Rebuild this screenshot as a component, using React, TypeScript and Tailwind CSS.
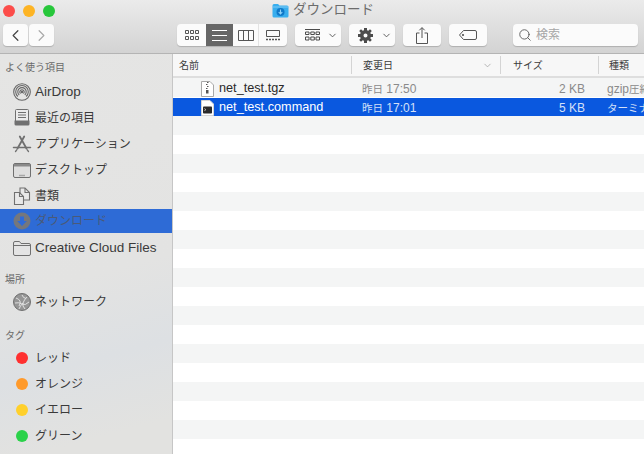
import { ChevronDown, ChevronLeft, ChevronRight, Search } from "lucide-react"
import type { ReactNode } from "react"

const font = "font-['Liberation_Sans','Noto_Sans_CJK_JP',sans-serif]"

function FolderBlue() {
  return (
    <svg width="17" height="15" viewBox="0 0 17 15">
      <path d="M.5 2.500Q.5 1 2 1h4l1.500 1.500H15Q16.500 2.500 16.500 4v9q0 1.500-1.500 1.500H2Q.5 14.500.5 13z" fill="#38aeee" />
      <path d="M.5 4h16" stroke="#7cc8f5" />
      <circle cx="8.500" cy="9" r="4" fill="#0f78c8" />
      <path d="M8.500 6.500v4M6.700 9l1.800 2 1.800-2" stroke="#8fd4fa" strokeWidth="1.100" fill="none" />
    </svg>
  )
}

function IconAirDrop() {
  return (
    <svg width="18" height="18" viewBox="0 0 18 18" fill="none" stroke="#666" strokeWidth="1.100">
      <circle cx="9" cy="9" r="8.300" />
      <path d="M4.800 13.500a6.300 6.300 0 1 1 8.400 0" />
      <path d="M6.200 12a4.200 4.200 0 1 1 5.600 0" />
      <path d="M7.500 10.600a2.200 2.200 0 1 1 3 0" />
      <circle cx="9" cy="9" r=".8" fill="#666" />
    </svg>
  )
}

function IconRecent() {
  return (
    <svg width="18" height="18" viewBox="0 0 18 18">
      <rect x="2.500" y=".5" width="13" height="13" rx="1" fill="#ececec" stroke="#707070" />
      <path d="M5 3.500h8M5 6h8M5 8.500h8" stroke="#707070" />
      <path d="M1.500 11.500h15V15q0 1.500-1.500 1.500H3Q1.500 16.500 1.500 15z" fill="#707070" />
    </svg>
  )
}

function IconApps() {
  return (
    <svg width="20" height="18" viewBox="0 0 20 18" fill="none" stroke="#707070" strokeWidth="1.800" strokeLinecap="round">
      <path d="M7.800 1.500 14.500 13.500M12.200 1.500 5.500 13.500" />
      <path d="M1.500 12.500h17" strokeWidth="1.500" />
      <path d="M3.500 16.500 4.800 14.800M16.500 16.500 15.200 14.800" strokeWidth="1.300" />
    </svg>
  )
}

function IconDesktop() {
  return (
    <svg width="18" height="15" viewBox="0 0 18 15">
      <rect x=".5" y=".5" width="17" height="14" rx="1.500" fill="#dedede" stroke="#707070" />
      <path d="M1 1h16v2.500H1z" fill="#8a8a8a" />
      <path d="M6.500 12.500h5" stroke="#707070" strokeDasharray="1 1" strokeWidth="1.500" />
    </svg>
  )
}

function IconDocs() {
  return (
    <svg width="18" height="18" viewBox="0 0 18 18" fill="none" stroke="#707070" strokeWidth="1.100">
      <path d="M7 1h5l4.500 4.500V13H7z" fill="#e8e8e8" />
      <path d="M12 1v4.500h4.500" />
      <path d="M1.500 5.500h5l4 4v8h-9z" fill="#e8e8e8" />
      <path d="M6.500 5.500v4h4" />
    </svg>
  )
}

function IconDownload() {
  return (
    <svg width="18" height="18" viewBox="0 0 18 18">
      <circle cx="9" cy="9" r="8.500" fill="#74777d" />
      <path d="M7 4.500h4v4.500h2.800L9 14 4.200 9H7z" fill="#2f6bd8" />
    </svg>
  )
}

function IconFolder() {
  return (
    <svg width="18" height="15" viewBox="0 0 18 15" fill="none" stroke="#707070">
      <path d="M.5 2Q.5.500 2 .500h4.500L8 2.500h8q1.500 0 1.500 1.500v9q0 1.500-1.500 1.500H2Q.5 14.500.5 13z" fill="#e4e4e4" />
      <path d="M.5 4.500h17" />
    </svg>
  )
}

function IconNetwork() {
  return (
    <svg width="18" height="18" viewBox="0 0 18 18">
      <circle cx="9" cy="9" r="8.500" fill="#969696" stroke="#707070" />
      <path d="M3 5q3 1 4 3t-1 5M9 2q1 3 4 3.500M14 4q-3 3-4 6t2 6M2 10q4-1 7 1t7-2M6 16q1-3 4-6" stroke="#e8e8e8" strokeWidth=".9" fill="none" />
    </svg>
  )
}

function IconGear() {
  return (
    <svg width="15" height="15" viewBox="0 0 15 15" fill="#4c4c4c">
      <path
        fillRule="evenodd"
        d="M6 0h3v2.200l1.300.5L12 1.200 13.800 3l-1.500 1.700.5 1.300H15v3h-2.200l-.5 1.300 1.500 1.700L12 13.800l-1.700-1.500-1.300.5V15H6v-2.200l-1.300-.5L3 13.800 1.200 12l1.500-1.700-.5-1.300H0V6h2.200l.5-1.300L1.200 3 3 1.200l1.700 1.500L6 2.200zM7.500 5.500a2 2 0 1 0 0 4 2 2 0 0 0 0-4z"
      />
    </svg>
  )
}

function TagDot({ color }: { color: string }) {
  return (
    <svg width="12" height="12" viewBox="0 0 12 12">
      <circle cx="6" cy="6" r="6" fill={color} />
    </svg>
  )
}

function ArchiveFile() {
  return (
    <svg width="13" height="16" viewBox="0 0 13 16">
      <path d="M.5.500h8.500l3.500 3.500v11.500H.5z" fill="#fff" stroke="#a8a8a8" />
      <path d="M6 1h1.500v1H6zM5 3h1.500v1H5zM6 5h1.500v1H6zM5 7h1.500v1H5z" fill="#555" />
      <path d="M5 9h2.500v3.500H5z" fill="#555" />
    </svg>
  )
}

function CommandFile() {
  return (
    <svg width="13" height="16" viewBox="0 0 13 16">
      <path d="M.5.500h8.500l3.500 3.500v11.500H.5z" fill="#fff" stroke="#d5d5d5" />
      <rect x="2" y="6.500" width="9" height="7" rx=".8" fill="#2a2a2a" />
      <path d="M3.300 8.500 5 9.700l-1.700 1" stroke="#ddd" strokeWidth=".7" fill="none" />
    </svg>
  )
}

function Label({ children, className }: { children: ReactNode; className?: string }) {
  return <div className={`flex items-center pl-[5px] pt-[2px] text-[10px] text-[#6a6a6a] ${className ?? ""}`}>{children}</div>
}

function SideItem({ icon, label, active, latin }: { icon: ReactNode; label: string; active?: boolean; latin?: boolean }) {
  return (
    <div className={`flex h-[26px] items-center ${active ? "border-b-2 border-[#e3e3e2] bg-[#2e6bd6]" : "border-y border-transparent"}`}>
      <div className="flex w-[35px] shrink-0 justify-center pl-[9px]">{icon}</div>
      <span className={`whitespace-nowrap ${latin ? "text-[13.500px]" : "text-[12px]"} ${active ? "text-[#4a5a78]" : "text-[#3a3a3a]"}`}>{label}</span>
    </div>
  )
}

function ToolButton({ children, className }: { children: ReactNode; className?: string }) {
  return (
    <div className={`flex h-[22px] items-center justify-center rounded-[4px] bg-[#fbfbfb] shadow-[0_1px_1px_rgba(0,0,0,0.18)] ${className ?? ""}`}>
      {children}
    </div>
  )
}

function ViewIcons() {
  return (
    <div className="flex h-[22px] w-[110px] overflow-hidden rounded-[4px] bg-[#fbfbfb] shadow-[0_1px_1px_rgba(0,0,0,0.18)]">
      <div className="flex w-[29px] items-center justify-center">
        <svg width="14" height="11" viewBox="0 0 14 11" fill="none" stroke="#555">
          <path d="M.5.500h3v3h-3zM5.500.500h3v3h-3zM10.500.500h3v3h-3zM.5 6.500h3v3h-3zM5.500 6.500h3v3h-3zM10.500 6.500h3v3h-3z" />
        </svg>
      </div>
      <div className="flex w-[27px] items-center justify-center bg-[#666666]">
        <svg width="15" height="11" viewBox="0 0 15 11" stroke="#fff">
          <path d="M0 .5h15M0 5.500h15M0 10.500h15" />
        </svg>
      </div>
      <div className="flex w-[26px] items-center justify-center border-r border-[#e3e3e3]">
        <svg width="16" height="11" viewBox="0 0 16 11" fill="none" stroke="#555">
          <path d="M.5.500h15v10H.5zM5.500.500v10M10.500.500v10" />
        </svg>
      </div>
      <div className="flex flex-1 items-center justify-center">
        <svg width="14" height="11" viewBox="0 0 14 11" fill="none" stroke="#555">
          <path d="M.5.500h13v6H.5z" />
          <path d="M0 9.500h14" strokeWidth="1.500" strokeDasharray="2 1" />
        </svg>
      </div>
    </div>
  )
}

const files = [
  { name: "net_test.tgz", time: "17:50", size: "2 KB", kindLatin: "gzip", kind: "圧縮アーカイブ", selected: false },
  { name: "net_test.command", time: "17:01", size: "5 KB", kindLatin: "", kind: "ターミナルシェルスクリプト", selected: true },
]

const blanks = Array.from({ length: 18 }, (_, i) => i)

export default function App() {
  return (
    <div className={`flex h-[454px] w-[644px] flex-col overflow-hidden bg-white ${font}`}>
      {/* title bar + toolbar */}
      <div className="h-[54px] shrink-0 border-b border-[#b4b4b4] bg-gradient-to-b from-[#ebebeb] to-[#d3d3d3]">
        <div className="grid h-[24px] grid-cols-[1fr_auto_1fr] pb-[3px]">
          <div className="flex items-center gap-[8px] pl-[3px]">
            <TagDot color="#fc4d4a" />
            <TagDot color="#fdb424" />
            <TagDot color="#27c73b" />
          </div>
          <div className="flex items-center gap-[4px] pl-[2px] text-[13.500px] text-[#6c6c6c]">
            <FolderBlue />
            <span>ダウンロード</span>
          </div>
          <div />
        </div>
        <div className="flex pl-[3px]">
          <div className="flex gap-[1px]">
            <ToolButton className="w-[25px]">
              <ChevronLeft size={19} strokeWidth={1.500} className="text-[#444]" />
            </ToolButton>
            <ToolButton className="w-[25px]">
              <ChevronRight size={19} strokeWidth={1.500} className="text-[#aaa]" />
            </ToolButton>
          </div>
          <div className="ml-[123px]">
            <ViewIcons />
          </div>
          <ToolButton className="ml-[8px] w-[46px] justify-start gap-[7px] pl-[10px]">
            <svg width="15" height="12" viewBox="0 0 15 12" fill="none" stroke="#4c4c4c">
              <path d="M0 .5h15M.5 3h3.500v2.500H.5zM5.800 3h3.500v2.500H5.800zM11 3h3.500v2.500H11zM.5 8h3.500v3H.5zM5.800 8h3.500v3H5.800zM11 8h3.500v3H11z" />
            </svg>
            <ChevronDown size={11} strokeWidth={2} className="text-[#555]" />
          </ToolButton>
          <ToolButton className="ml-[8px] w-[46px] justify-start gap-[8px] pl-[9px]">
            <IconGear />
            <ChevronDown size={11} strokeWidth={2} className="text-[#555]" />
          </ToolButton>
          <ToolButton className="ml-[8px] w-[38px]">
            <svg width="12" height="17" viewBox="0 0 12 17" fill="none" stroke="#555">
              <path d="M3.500 6H.5v10.500h11V6h-3M6 11V.8M3.300 3.300 6 .6l2.700 2.700" />
            </svg>
          </ToolButton>
          <ToolButton className="ml-[8px] w-[38px]">
            <svg width="18" height="10" viewBox="0 0 18 10" fill="none" stroke="#555">
              <path d="M4.500.5H16q1.500 0 1.500 1.500v6q0 1.500-1.500 1.500H4.500L.5 5z" />
              <circle cx="4" cy="5" r=".7" fill="#555" />
            </svg>
          </ToolButton>
          <ToolButton className="ml-[26px] w-[125px] justify-start gap-[4px] pl-[5px]">
            <Search size={14} strokeWidth={1.500} className="text-[#555]" />
            <span className="text-[12px] text-[#a6a6a6]">検索</span>
          </ToolButton>
        </div>
      </div>

      <div className="flex min-h-0 flex-1">
        {/* sidebar */}
        <div className="w-[173px] shrink-0 border-r border-[#c6c6c6] bg-[linear-gradient(165deg,#e5e5e4_0%,#e3e3e2_55%,#dde0e3_74%,#e2e2e0_92%)]">
          <Label className="h-[25px]">よく使う項目</Label>
          <SideItem icon={<IconAirDrop />} label="AirDrop" latin />
          <SideItem icon={<IconRecent />} label="最近の項目" />
          <SideItem icon={<IconApps />} label="アプリケーション" />
          <SideItem icon={<IconDesktop />} label="デスクトップ" />
          <SideItem icon={<IconDocs />} label="書類" />
          <SideItem icon={<IconDownload />} label="ダウンロード" active />
          <SideItem icon={<IconFolder />} label="Creative Cloud Files" latin />
          <Label className="mt-[7px] h-[21px]">場所</Label>
          <SideItem icon={<IconNetwork />} label="ネットワーク" />
          <Label className="mt-[8px] h-[22px]">タグ</Label>
          <SideItem icon={<TagDot color="#ff3030" />} label="レッド" />
          <SideItem icon={<TagDot color="#ff9a2b" />} label="オレンジ" />
          <SideItem icon={<TagDot color="#ffd02c" />} label="イエロー" />
          <SideItem icon={<TagDot color="#2bd24a" />} label="グリーン" />
        </div>

        {/* file list */}
        <div className="min-w-0 flex-1 overflow-hidden">
          <div className="grid h-[24px] grid-cols-[178px_149px_98px_1fr] items-center border-b-2 border-[#dedede] bg-[#f7f7f7] text-[10px] text-[#3c3c3c]">
            <div className="pl-[6px]">名前</div>
            <div className="flex h-[18px] items-center justify-between border-l border-[#d4d4d4] pl-[11px] pr-[7px]">
              <span>変更日</span>
              <ChevronDown size={11} strokeWidth={1.500} className="text-[#999]" />
            </div>
            <div className="flex h-[18px] items-center border-l border-[#d4d4d4] pl-[12px]">サイズ</div>
            <div className="flex h-[18px] items-center border-l border-[#d4d4d4] pl-[10px]">種類</div>
          </div>

          {files.map((f) => (
            <div key={f.name} className={f.selected ? "h-[19px] border-t border-white" : "h-[19px] bg-[#f4f5f5] pt-[1px]"}>
              <div className={`grid h-full grid-cols-[178px_149px_98px_1fr] items-center whitespace-nowrap text-[12px] ${f.selected ? "bg-[#0a58df] text-[#d4e0f8]" : "text-[#8a8a8a]"}`}>
                <div className={`flex items-center gap-[5px] pl-[28px] text-[12.700px] ${f.selected ? "text-white" : "text-[#2a2a2a]"}`}>
                  {f.selected ? <CommandFile /> : <ArchiveFile />}
                  <span>{f.name}</span>
                </div>
                <div className="pl-[11px]">
                  <span className="text-[10.500px]">昨日</span> {f.time}
                </div>
                <div className="pr-[13px] text-right">{f.size}</div>
                <div className="overflow-hidden pl-[9px]">
                  {f.kindLatin}
                  <span className="text-[10.500px]">{f.kind}</span>
                </div>
              </div>
            </div>
          ))}

          {blanks.map((i) => (
            <div key={i} className={i % 2 === 0 ? "h-[19px] bg-[#f4f5f5]" : "h-[19px] bg-white"} />
          ))}
        </div>
      </div>
    </div>
  )
}
